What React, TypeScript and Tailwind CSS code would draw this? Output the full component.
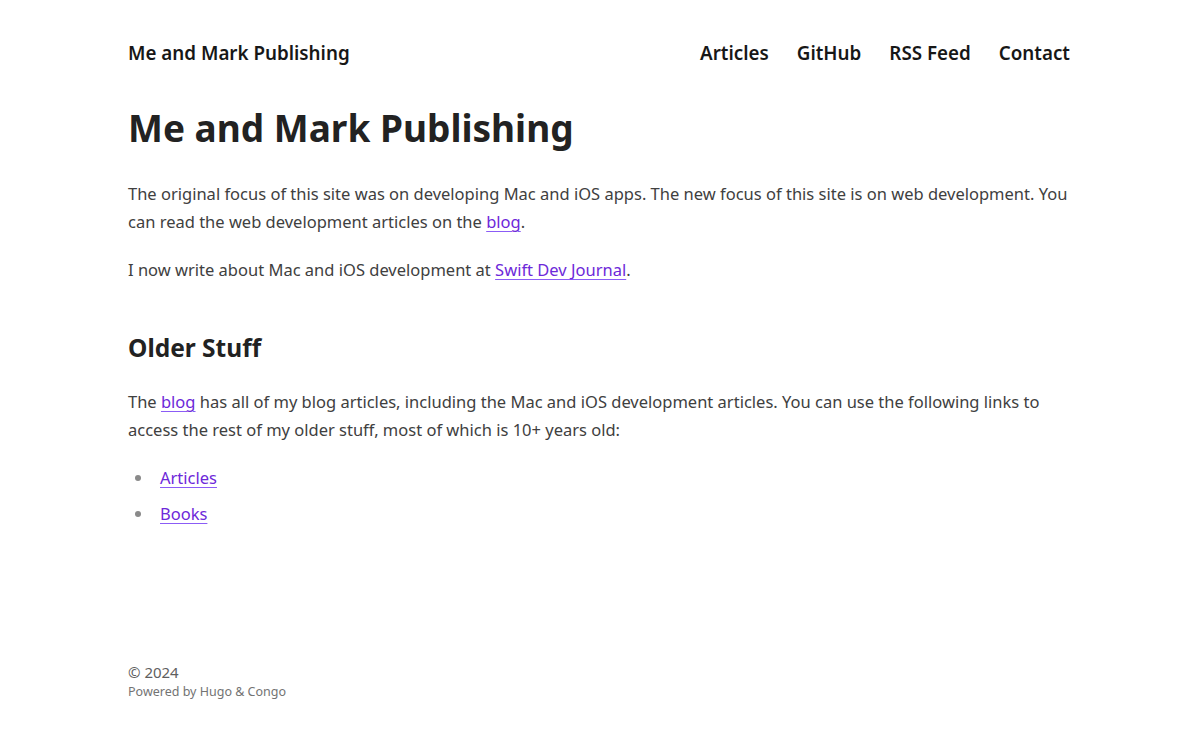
export default function App() {
  const link =
    "text-[#6d28d9] underline decoration-[#8b5cf6] underline-offset-[3px] decoration-1";
  return (
    <div
      className="flex h-[740px] flex-col bg-white px-32 text-[#404040]"
      style={{ fontFamily: '"Noto Sans", "Open Sans", sans-serif' }}
    >
      {/* Header */}
      <header className="flex items-center justify-between pt-[39px] pb-[21px]">
        <a className="text-[18.8px] font-semibold text-[#171717]">Me and Mark Publishing</a>
        <nav className="mr-[2px] flex items-center gap-7 text-[18.8px] font-semibold text-[#171717]">
          <a>Articles</a>
          <a>GitHub</a>
          <a>RSS Feed</a>
          <a>Contact</a>
        </nav>
      </header>

      {/* Main */}
      <main className="grow">
        <h1 className="mt-[14px] text-[37px] leading-[52px] font-bold text-[#222]">
          Me and Mark Publishing
        </h1>
        <p className="mt-[26px] text-[16.5px] leading-[28px]">
          The original focus of this site was on developing Mac and iOS apps. The new focus of
          this site is on web development. You can read the web development articles on the{" "}
          <a className={link}>blog</a>.
        </p>
        <p className="mt-[20px] text-[16.5px] leading-[28px]">
          I now write about Mac and iOS development at <a className={link}>Swift Dev Journal</a>.
        </p>
        <h2 className="mt-[48px] text-[24.5px] leading-[32px] font-bold text-[#222]">
          Older Stuff
        </h2>
        <p className="mt-[24px] text-[16.5px] leading-[28px]">
          The <a className={link}>blog</a> has all of my blog articles, including the Mac and iOS
          development articles. You can use the following links to access the rest of my older
          stuff, most of which is 10+ years old:
        </p>
        <ul className="mt-[20px] list-disc pl-[26px] text-[16.5px] leading-[28px] marker:text-[#8a8a8a]">
          <li className="pl-[6px]">
            <a className={link}>Articles</a>
          </li>
          <li className="mt-[8px] pl-[6px]">
            <a className={link}>Books</a>
          </li>
        </ul>
      </main>

      {/* Footer */}
      <footer className="pb-[40px]">
        <p className="mb-[4px] text-[15px] leading-[16px] text-[#5f5f5f]">© 2024</p>
        <p className="text-[12.5px] leading-[16px] text-[#737373]">Powered by Hugo &amp; Congo</p>
      </footer>
    </div>
  );
}
